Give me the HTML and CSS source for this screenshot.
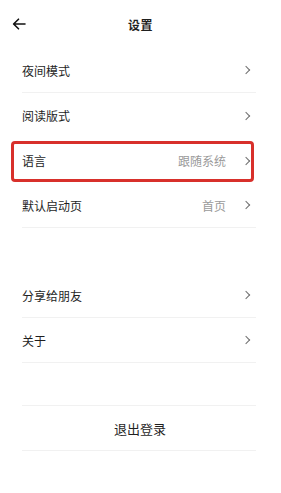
FILE: index.html
```html
<!DOCTYPE html>
<html lang="zh-CN">
<head>
    <meta charset="UTF-8" />
    <meta name="viewport" content="width=device-width, initial-scale=1" />
    <title>设置</title>
    <link rel="stylesheet" href="styles.css">
</head>
<body>
    <header class="topbar">
        <svg class="back" width="14" height="12" viewBox="0 0 14 12" aria-hidden="true">
            <path d="M13 6H1.8M6.5 1.2L1.6 6l4.9 4.8" fill="none" stroke="#111" stroke-width="1.6" stroke-linecap="round" stroke-linejoin="round"/>
        </svg>
        <h1>设置</h1>
    </header>

    <main>
        <ul class="list">
            <li class="row line">
                <span class="label">夜间模式</span>
                <span class="chev"></span>
            </li>
            <li class="row">
                <span class="label">阅读版式</span>
                <span class="chev"></span>
            </li>
            <li class="row marked">
                <span class="label">语言</span>
                <span class="value">跟随系统</span>
                <span class="chev"></span>
                <span class="highlight"></span>
            </li>
            <li class="row line">
                <span class="label">默认启动页</span>
                <span class="value">首页</span>
                <span class="chev"></span>
            </li>
        </ul>

        <ul class="list group">
            <li class="row line">
                <span class="label">分享给朋友</span>
                <span class="chev"></span>
            </li>
            <li class="row line">
                <span class="label">关于</span>
                <span class="chev"></span>
            </li>
        </ul>

        <div class="logout">退出登录</div>
    </main>
</body>
</html>
```

FILE: styles.css
```css
:root {
    --texto: #1f1f1f;
    --gris: #9a9a9a;
    --linea: #f1f1f1;
    --rojo: #d8302b;
}

* {
    box-sizing: border-box;
    margin: 0;
    padding: 0;
}

body {
    background: #fff;
    color: var(--texto);
    font-family: "Noto Sans CJK SC", "Noto Sans", sans-serif;
    font-size: 12px;
    width: 281px;
    min-height: 493px;
}

.topbar {
    height: 48px;
    display: flex;
    align-items: center;
    justify-content: center;
    position: relative;
}

.back {
    position: absolute;
    left: 12px;
    top: 18px;
}

.topbar h1 {
    font-size: 12px;
    font-weight: 600;
    letter-spacing: 0.5px;
}

.list {
    list-style: none;
    margin: 0 25px 0 22px;
}

.group {
    margin-top: 45px;
}

.row {
    height: 45px;
    display: flex;
    align-items: center;
    position: relative;
    padding-right: 6px;
}

.row.line {
    border-bottom: 1px solid var(--linea);
}

.label {
    flex: 1;
}

.value {
    color: var(--gris);
    margin-right: 17px;
}

.chev {
    width: 6px;
    height: 6px;
    border-top: 1.3px solid #6f6f6f;
    border-right: 1.3px solid #6f6f6f;
    transform: rotate(45deg);
    margin-right: 1px;
}

.highlight {
    position: absolute;
    left: -11px;
    top: 3px;
    width: 243px;
    height: 41px;
    border: 3px solid var(--rojo);
    border-radius: 4px;
}

.logout {
    margin: 42px 25px 0 22px;
    height: 46px;
    border-top: 1px solid var(--linea);
    border-bottom: 1px solid var(--linea);
    display: flex;
    align-items: center;
    justify-content: center;
    font-size: 13px;
    padding-left: 2px;
}
```
